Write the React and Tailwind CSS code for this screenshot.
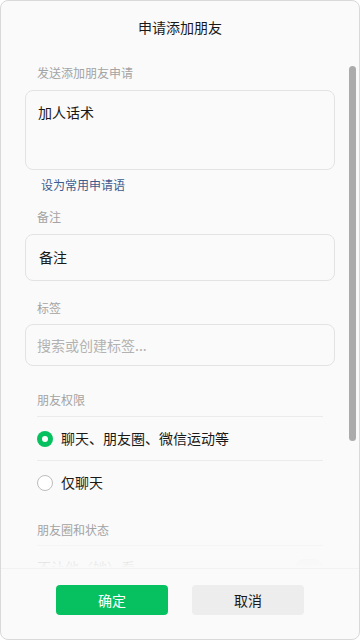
import React from "react";

function Radio({ checked }) {
  if (checked) {
    return (
      <span className="flex h-4 w-4 shrink-0 items-center justify-center rounded-full bg-[#07c160]">
        <span className="h-[6px] w-[6px] rounded-full bg-white" />
      </span>
    );
  }
  return <span className="h-4 w-4 shrink-0 rounded-full border border-[#bdbdbd] bg-white" />;
}

export default function App() {
  return (
    <div
      className="relative h-[640px] w-[360px] bg-white"
      style={{ fontFamily: '"Noto Sans CJK SC", "Noto Sans", sans-serif' }}
    >
      <div className="flex h-full w-full flex-col overflow-hidden rounded-[8px] border border-[#d9d9d9] bg-[#fafafa]">
        <div className="flex h-[52px] shrink-0 items-center justify-center text-[14px] leading-[20px] text-[#191919]">
          申请添加朋友
        </div>

        <div className="relative flex-1 overflow-hidden">
          <div className="flex flex-col px-[24px] pt-[11px]">
            <div className="pl-[12px] text-[12px] leading-[18px] text-[#a3a3a3]">发送添加朋友申请</div>
            <div className="mt-[8px] h-[80px] rounded-[8px] border border-[#e3e3e3] bg-[#fafafa] px-[12px] pt-[11px] text-[14px] leading-[20px] text-[#191919]">
              加人话术
            </div>
            <div className="mt-[7px] pl-[16px] text-[12px] leading-[16px] text-[#3e5b8f]">设为常用申请语</div>

            <div className="mt-[15px] pl-[12px] text-[12px] leading-[18px] text-[#a3a3a3]">备注</div>
            <div className="mt-[8px] flex h-[47px] items-center rounded-[8px] border border-[#e3e3e3] bg-[#fafafa] px-[13px] text-[14px] text-[#191919]">
              备注
            </div>

            <div className="mt-[18px] pl-[12px] text-[12px] leading-[18px] text-[#a3a3a3]">标签</div>
            <div className="mt-[7px] flex h-[42px] items-center rounded-[8px] border border-[#e3e3e3] bg-[#fafafa] px-[11px] text-[14px] text-[#b2b2b2]">
              搜索或创建标签...
            </div>

            <div className="mx-[12px] flex flex-col">
              <div className="mt-[25px] text-[12px] leading-[18px] text-[#a3a3a3]">朋友权限</div>
              <div className="mt-[7px] h-px bg-[#ebebeb]" />
              <div className="flex h-[43px] items-center gap-[8px] text-[14px] text-[#191919]">
                <Radio checked />
                <span>聊天、朋友圈、微信运动等</span>
              </div>
              <div className="h-px bg-[#ebebeb]" />
              <div className="flex h-[43px] items-center gap-[8px] text-[14px] text-[#191919]">
                <Radio />
                <span>仅聊天</span>
              </div>

              <div className="mt-[17px] text-[12px] leading-[18px] text-[#a3a3a3]">朋友圈和状态</div>
              <div className="mt-[6px] h-px bg-[#ebebeb]" />
              <div className="flex h-[43px] items-center justify-between text-[14px] text-[#191919]">
                <span>不让他（她）看</span>
                <span className="h-[18px] w-[28px] rounded-full bg-[#e5e5e5]" />
              </div>
            </div>
          </div>

          <div className="pointer-events-none absolute bottom-0 left-0 right-0 h-[24px] bg-gradient-to-b from-[#fafafa]/60 to-[#fafafa]" />
          <div className="absolute right-[3px] top-[13px] h-[375px] w-[7px] rounded-full bg-[#ababab]" />
        </div>

        <div className="flex h-[71px] shrink-0 justify-center gap-[24px] border-t border-[#f2f2f2] pt-[16px]">
          <button className="h-[30px] w-[112px] rounded-[4px] bg-[#07c160] text-[14px] text-white">确定</button>
          <button className="h-[30px] w-[112px] rounded-[4px] bg-[#ededed] text-[14px] text-[#191919]">取消</button>
        </div>
      </div>
    </div>
  );
}
